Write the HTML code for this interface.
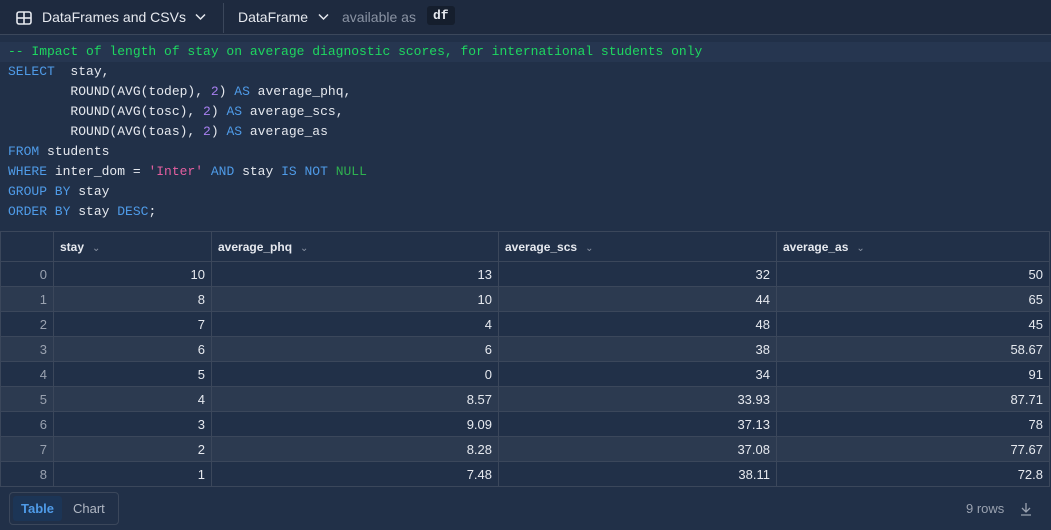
<!DOCTYPE html>
<html><head><style>
*{margin:0;padding:0;box-sizing:border-box}
body{width:1051px;height:530px;background:#213048;font-family:"Liberation Sans",sans-serif;color:#e6e9ef;overflow:hidden;position:relative}
.top{position:absolute;left:0;top:0;width:1051px;height:35px;background:#1e2a3f;border-bottom:1px solid #3b475b}
.top span{position:absolute;top:9px;font-size:14px}
.code{position:absolute;left:0;top:42px;width:1051px;font-family:"Liberation Mono",monospace;font-size:13px;line-height:20px;color:#e6e9ef}
.code div{padding-left:8px;height:20px;white-space:pre}
.hl{background:#263650}
.c{color:#1ed760}.k{color:#4f9be8}.n{color:#a77ff0}.s{color:#e45fa0}.g{color:#2fb050}
table{position:absolute;left:0;top:231px;border-collapse:collapse;font-size:13px}
td,th{border:1px solid #3b475b;height:25px;padding:0 6px;text-align:right}
th{height:30px;text-align:left;font-weight:bold;font-size:12px}
th i{font-style:normal;color:#8a93a3;font-weight:normal;margin-left:8px;font-size:10px}
td:first-child{color:#9aa2b0}
tr.a td{background:#2c3a50}
.btns{position:absolute;left:9px;top:492px;width:110px;height:33px;border:1px solid #3b475b;border-radius:4px}
.btns span{position:absolute;top:3px;height:25px;line-height:25px;font-size:13px;padding:0 8px;border-radius:3px}
</style></head><body>
<div class="top">
<svg style="position:absolute;left:16px;top:11px" width="16" height="14" viewBox="0 0 16 14"><rect x="1" y="1" width="14" height="12" rx="2" fill="none" stroke="#e6e9ef" stroke-width="1.6"/><line x1="1" y1="7" x2="15" y2="7" stroke="#e6e9ef" stroke-width="1.6"/><line x1="8" y1="1" x2="8" y2="13" stroke="#e6e9ef" stroke-width="1.6"/></svg>
<span style="left:42px">DataFrames and CSVs</span>
<svg style="position:absolute;left:195px;top:13px" width="11" height="8" viewBox="0 0 11 8"><path d="M1 1.5l4.5 4.5 4.5-4.5" fill="none" stroke="#e6e9ef" stroke-width="1.5"/></svg>
<div style="position:absolute;left:223px;top:3px;width:1px;height:30px;background:#3b475b"></div>
<span style="left:238px">DataFrame</span>
<svg style="position:absolute;left:318px;top:13px" width="11" height="8" viewBox="0 0 11 8"><path d="M1 1.5l4.5 4.5 4.5-4.5" fill="none" stroke="#e6e9ef" stroke-width="1.5"/></svg>
<span style="left:342px;color:#8a93a3">available as</span>
<span style="left:427px;top:6px;background:#151e2d;padding:2px 6px;border-radius:3px;font-family:'Liberation Mono',monospace;font-size:13px;font-weight:bold">df</span>
</div>
<div class="code">
<div class="hl"><span class="c">-- Impact of length of stay on average diagnostic scores, for international students only</span></div>
<div><span class="k">SELECT</span>  stay,</div>
<div>        ROUND(AVG(todep), <span class="n">2</span>) <span class="k">AS</span> average_phq,</div>
<div>        ROUND(AVG(tosc), <span class="n">2</span>) <span class="k">AS</span> average_scs,</div>
<div>        ROUND(AVG(toas), <span class="n">2</span>) <span class="k">AS</span> average_as</div>
<div><span class="k">FROM</span> students</div>
<div><span class="k">WHERE</span> inter_dom = <span class="s">'Inter'</span> <span class="k">AND</span> stay <span class="k">IS NOT</span> <span class="g">NULL</span></div>
<div><span class="k">GROUP BY</span> stay</div>
<div><span class="k">ORDER BY</span> stay <span class="k">DESC</span>;</div>
</div>
<table>
<tr><th style="width:53px"></th><th style="width:158px">stay<i>⌄</i></th><th style="width:287px">average_phq<i>⌄</i></th><th style="width:278px">average_scs<i>⌄</i></th><th style="width:273px">average_as<i>⌄</i></th></tr>
<tr><td>0</td><td>10</td><td>13</td><td>32</td><td>50</td></tr>
<tr class="a"><td>1</td><td>8</td><td>10</td><td>44</td><td>65</td></tr>
<tr><td>2</td><td>7</td><td>4</td><td>48</td><td>45</td></tr>
<tr class="a"><td>3</td><td>6</td><td>6</td><td>38</td><td>58.67</td></tr>
<tr><td>4</td><td>5</td><td>0</td><td>34</td><td>91</td></tr>
<tr class="a"><td>5</td><td>4</td><td>8.57</td><td>33.93</td><td>87.71</td></tr>
<tr><td>6</td><td>3</td><td>9.09</td><td>37.13</td><td>78</td></tr>
<tr class="a"><td>7</td><td>2</td><td>8.28</td><td>37.08</td><td>77.67</td></tr>
<tr><td>8</td><td>1</td><td>7.48</td><td>38.11</td><td>72.8</td></tr>
</table>
<div class="btns"><span style="left:3px;background:#1c3556;color:#4f9be8;font-weight:bold">Table</span><span style="left:55px;color:#b0b7c3">Chart</span></div>
<div style="position:absolute;left:966px;top:501px;font-size:13px;color:#9aa2b0">9 rows</div>
<svg style="position:absolute;left:1020px;top:502px" width="12" height="14" viewBox="0 0 12 14"><path d="M6 1V10M2 6l4 4 4-4M1 13h10" fill="none" stroke="#9aa2b0" stroke-width="1.3"/></svg>
</body></html>
